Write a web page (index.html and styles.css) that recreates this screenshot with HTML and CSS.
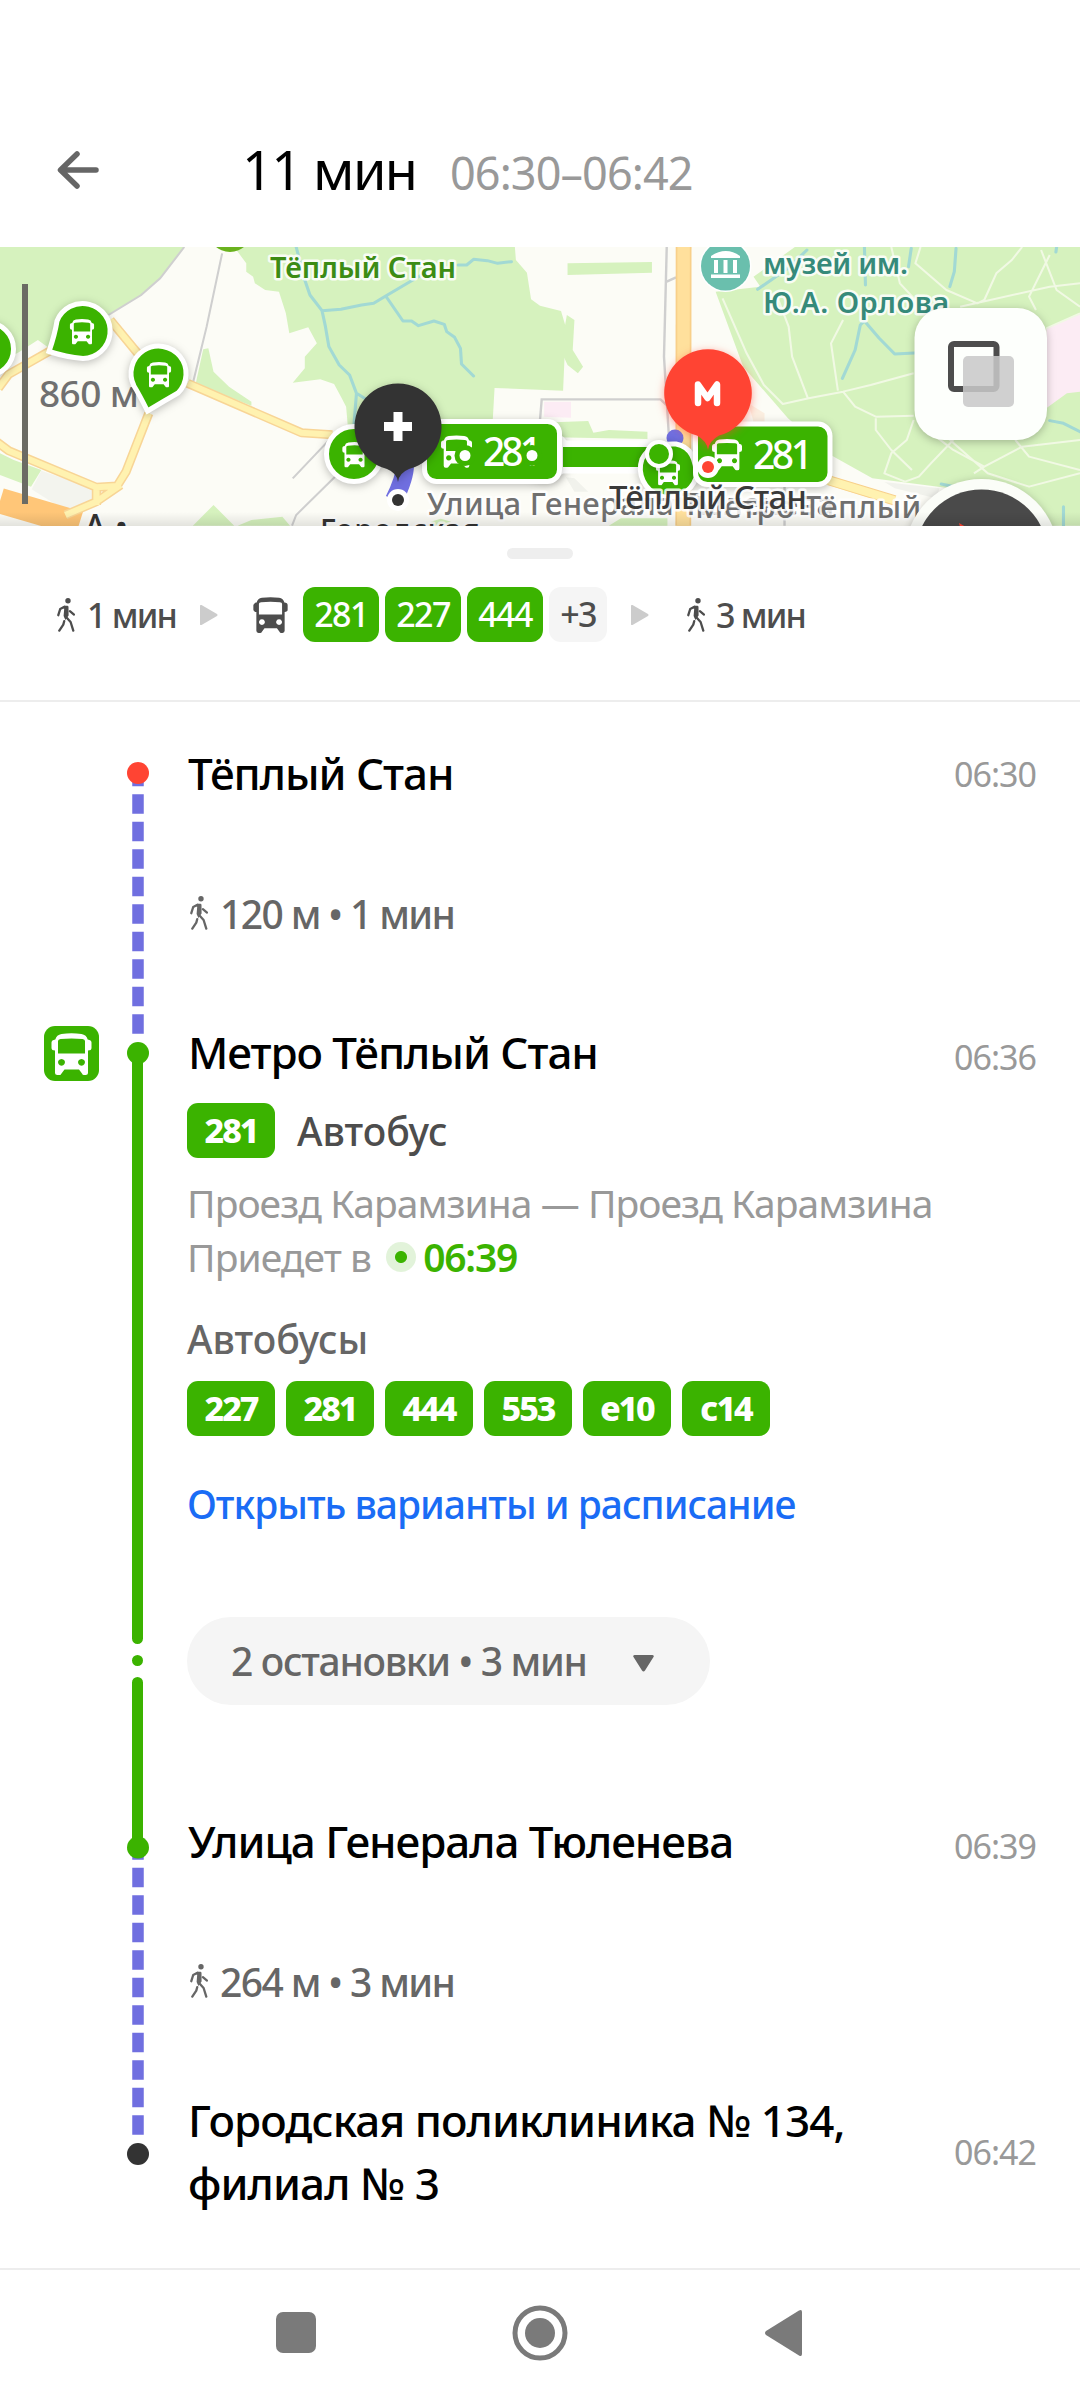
FILE: index.html
```html
<!DOCTYPE html>
<html lang="ru">
<head>
<meta charset="utf-8">
<title>Маршрут</title>
<link rel="stylesheet" href="styles.css">
</head>
<body>
<svg class="defs" width="0" height="0" aria-hidden="true">
  <defs>
    <symbol id="bus" viewBox="0 0 40 42">
      <path fill="currentColor" fill-rule="evenodd" d="M10 1Q20-.6 30 1Q35 1.8 36.2 6.5Q40 7 40 9.5V15Q40 17.5 36.5 17.5V39.5Q36.5 42 34 42H32.5Q31 42 30.5 40.5L27.5 36.5H13L10 40.5Q9.5 42 8 42H6Q3.5 42 3.5 39.5V17.5Q0 17.5 0 15V9.5Q0 7 3.8 6.5Q5 1.8 10 1ZM9 6Q6.5 6.3 6.5 8V20.5H33.5V8Q33.5 6.3 31 6Q20 5 9 6ZM10 25.9a3.4 3.4 0 1 0 .01 0ZM30 25.9a3.4 3.4 0 1 0 .01 0Z"/>
    </symbol>
    <symbol id="walk" viewBox="0 0 18 34">
      <circle cx="11" cy="2.8" r="2.7" fill="currentColor"/>
      <path fill="currentColor" d="M4.5 9.6L7.9 7.8H10.4Q11.4 7.8 11.5 9L11.6 17.4L8.4 22L6.6 18L7.2 10.8Z"/>
      <g fill="none" stroke="currentColor" stroke-width="2.3" stroke-linecap="round" stroke-linejoin="round">
        <path d="M1.3 17.2L3.2 11L7.5 8.8M12.9 13.2L17 16.6M8.6 18.5L13.6 24L16.3 32.6M7.2 23.2L6.3 26.6L2.3 32.6"/>
      </g>
    </symbol>
  </defs>
</svg>

<header class="header">
  <svg class="back" viewBox="0 0 42 38"><path d="M20 3L3.500 19L20 35M4 19H39"/></svg>
  <h1 class="total">11 мин</h1>
  <span class="range">06:30–06:42</span>
</header>

<svg class="map" viewBox="0 247 1080 279">
  <rect x="0" y="247" width="1080" height="279" fill="#fcfcf6"/>
  <g transform="translate(0 240) scale(.3444 .3333)">
    <g fill="#d6f2be">
      <path d="M0 21H535L465 115L410 165L315 225L150 330L110 300L50 340L20 350L0 352Z"/>
      <path d="M680 21L715 70V95L735 110L740 130L770 150L810 155L830 220L840 280L895 262L920 310L885 350V385L850 428L930 418L970 432L990 470L1005 500L1010 560L1430 555L1436 444L1635 452L1643 262L1629 213L1568 197L1542 178L1530 98L1498 60L1495 21Z"/>
      <path d="M590 328L605 325L620 395L665 440L730 485V497L568 432Z"/>
      <path d="M0 640L40 660L120 690L90 740L0 705Z"/>
      <path d="M560 857L620 795L680 857ZM690 857L730 840L820 830L842 857ZM1250 845L1280 836L1310 845L1300 857H1260Z"/>
    </g>
    <path fill="#f3f4ee" d="M120 692L270 745V790L190 812L92 748Z"/>
    <g fill="none" stroke="#cfcfcf" stroke-width="6">
      <path d="M535 21L465 115L410 165L315 225M645 40L600 260L560 430M965 590L850 715M975 708L860 825L848 857"/>
    </g>
    <path d="M0 782L230 852" fill="none" stroke="#ffc678" stroke-width="76"/>
    <g fill="none" stroke-linejoin="round">
      <path stroke="#f8d596" stroke-width="27" d="M-10 605L25 632L280 742L340 738L366 695L432 520M-5 445L25 403L150 330M320 240L400 340M545 430L875 578L965 584M190 825L280 785L350 735M280 742V795"/>
      <path stroke="#fff2b0" stroke-width="18" d="M-10 605L25 632L280 742L340 738L366 695L432 520M-5 445L25 403L150 330M320 240L400 340M545 430L875 578L965 584M190 825L280 785L350 735M280 742V795"/>
    </g>
    <g fill="none" stroke="#a2d9d4" stroke-width="9" stroke-linejoin="round" stroke-linecap="round">
      <path d="M860 21L885 120L900 165L935 212L945 260L955 320L985 375L1015 405L1035 460L1028 552M935 212L990 208L1050 195L1085 190L1120 168L1195 122L1240 95M1120 168L1170 243H1195L1215 257L1260 243L1290 253L1297 275L1320 292L1337 325L1340 372L1375 408M1330 75H1355L1375 58L1415 62L1445 70L1485 65M1035 460L1070 482"/>
    </g>
  </g>
  <g transform="translate(540 240) scale(.3444 .3333)">
    <g fill="#d6f2be">
      <path d="M80 70L325 66V98L80 105ZM78 225L100 240L95 330L125 380L110 400L80 375L60 330Z"/>
      <path d="M40 547L140 543L155 578L200 570L312 575V597L40 592Z"/>
      <path d="M740 21L620 110L640 140L510 155L590 380L720 535L835 640L965 715L1190 745L1200 857H1568V21Z"/>
      <path d="M200 857L235 835H370V857Z"/>
    </g>
    <path fill="#fcecf4" d="M12 485H90V533L12 530ZM1470 265L1568 222V455L1530 460L1470 505Z"/>
    <path fill="#fbeee0" d="M605 490L652 520V545H620Z"/>
    <path fill="#f1f2ec" d="M1000 726L1160 745L1150 775L1030 745ZM75 712L100 715L140 755H100Z"/>
    <g fill="none" stroke="#cfcfcf" stroke-width="7">
      <path d="M368 21L360 350L375 600M0 540L5 478H350L372 500M368 125L395 112M710 730V857"/>
    </g>
    <path stroke="#f8d08a" stroke-width="46" d="M417 21L416 857"/>
    <path stroke="#ffe09c" stroke-width="36" d="M417 21L416 857"/>
    <path stroke="#fff2b0" stroke-width="28" d="M835 720L1030 782"/>
    <path stroke="#f8d08a" stroke-width="3" d="M835 706L1034 768M835 734L1030 796"/>
    <g fill="none" stroke="#f1f9e4" stroke-width="6" stroke-linejoin="round">
      <path d="M530 175L600 340L650 435L705 492L780 475L880 455L960 435L1085 400M685 160L722 260L732 350L778 475M880 240L845 310L865 452M880 455L915 500L975 530L1085 527M975 535V570L1020 630L1080 690M1020 21L1045 130L1090 180M1105 21L1090 70L1180 150L1270 190L1290 180L1325 100L1370 60L1400 21M1220 200L1480 140L1568 130M1455 30L1500 150L1568 200M1480 45L1420 170L1440 210M1150 590L1200 630L1290 680L1260 700M1290 680L1400 620L1568 600M1180 590L1300 700L1420 740L1568 700M1380 600L1420 650L1568 690M1470 265L1568 220M1085 540L1065 600L1020 640L1000 700L1060 725L1100 710L1135 670L1200 600"/>
    </g>
    <g fill="none" stroke="#a2d9d4" stroke-width="9" stroke-linejoin="round" stroke-linecap="round">
      <path d="M775 30L720 85L632 148M942 21L945 135M1078 25L1070 80M1208 25L1203 95L1190 140M1500 21L1498 36M878 415L915 330L930 255L942 243L985 295L1030 342L1130 337M1480 542L1520 550L1568 575M1165 732L1210 742M1520 800V857"/>
    </g>
  </g>

  <g class="halo-label">
    <text x="270" y="278" font-size="29" fill="#3c8c14" font-weight="600" textLength="186">Тёплый Стан</text>
    <text x="763" y="273.500" font-size="29" fill="#368a7a" font-weight="600" textLength="145">музей им.</text>
    <text x="763" y="312.500" font-size="29" fill="#368a7a" font-weight="600" textLength="186">Ю.А. Орлова</text>
  </g>
  <circle cx="725.500" cy="266" r="26" fill="#fff"/>
  <circle cx="725.500" cy="266" r="24.500" fill="#6abfad"/>
  <path fill="#fff" d="M711 256Q726 246 740 256V258H711ZM714 260H718V273H714ZM723.500 260H727.500V273H723.500ZM733 260H737V273H733ZM711 274.500H740V278H711Z"/>
  <circle cx="230" cy="230" r="22" fill="#6ab21e"/>

  <!-- scale -->
  <path stroke="#6b6b64" stroke-width="6" d="M25 284V504"/>
  <text x="39" y="407" font-size="37" font-weight="500" fill="#707070" textLength="100">860 м</text>

  <!-- vehicles -->
  <g fill="#3bb300" stroke="#fff" stroke-width="5" class="lift">
    <circle cx="-13" cy="349" r="26.500"/>
    <path d="M49 351.500Q55 334 57 321A27.500 27.500 0 1 1 83 358.500Q66 357 49 351.500Z"/>
    <path d="M147.500 411Q139 394 134 386A27.500 27.500 0 1 1 178 393Q164 401 147.500 411Z"/>
    <circle cx="354" cy="454" r="27.500"/>
  </g>
  <g color="#fff">
    <use href="#bus" x="69.500" y="319" width="25" height="25.500"/>
    <use href="#bus" x="146.500" y="362" width="25" height="25.500"/>
    <use href="#bus" x="342" y="442" width="25" height="25.500"/>
  </g>

  <!-- route -->
  <circle cx="546" cy="455" r="25" fill="#fff" class="lift"/>
  <path stroke="#fff" stroke-width="33" d="M560 457H660"/>
  <path stroke="#3bb300" stroke-width="20" d="M563 457H660"/>
  <path fill="none" stroke="#706fe0" stroke-width="18" d="M405 465Q405 478 394 500"/>
  <circle cx="675" cy="438" r="8.500" fill="#706fe0"/>
  <path class="lift" fill="#3bb300" stroke="#fff" stroke-width="5" d="M676 444Q697 448 696 478A28 28 0 1 1 642 459Q650 443 676 444Z"/>
  <use href="#bus" x="656" y="460" width="24" height="25.500" color="#fff"/>
  <circle cx="659" cy="454" r="12" fill="#3bb300" stroke="#fff" stroke-width="4" class="lift"/>
  <g fill="#3bb300" stroke="#fff" stroke-width="5" class="lift">
    <rect x="424.500" y="421.500" width="135" height="60" rx="12"/>
    <rect x="695.500" y="424" width="134.500" height="60.500" rx="12"/>
  </g>
  <use href="#bus" x="441" y="435" width="31" height="33" color="#fff"/>
  <use href="#bus" x="712" y="438" width="30" height="33" color="#fff"/>
  <g fill="#fff" font-size="39" font-weight="500">
    <text x="483" y="466" textLength="59">281</text>
    <text x="753" y="468.500" textLength="60">281</text>
  </g>
  <g fill="#fff" stroke="#3bb300" stroke-width="5"><circle cx="465" cy="455.500" r="8"/><circle cx="532" cy="455.500" r="8"/></g>

  <g class="halo-label">
    <text x="427" y="515" font-size="31" fill="#707070" textLength="407">Улица Генерала Тюленева</text>
    <text x="695" y="518" font-size="31" fill="#707070" textLength="308">Метро Тёплый Стан</text>
    <text x="609" y="508.500" font-size="33" fill="#3a3a3a" textLength="198">Тёплый Стан</text>
    <text x="320" y="541" font-size="30" fill="#333" textLength="160">Городская</text>
    <text x="84" y="539" font-size="34" fill="#333">А •</text>
  </g>

  <!-- start and finish pins -->
  <g>
    <circle cx="398" cy="500" r="11" fill="#fff"/><circle cx="398" cy="500" r="6" fill="#333"/>
    <path class="lift" fill="#333" d="M398 482Q397 473 387 469A43.500 43.500 0 1 1 409 469Q399 473 398 482Z"/>
    <path stroke="#fff" stroke-width="9" d="M384 426.500H412M398 412V441"/>
    <circle cx="708" cy="467" r="11" fill="#fff"/><circle cx="708" cy="467" r="6" fill="#ff4433"/>
    <path class="lift-red" fill="#ff4433" d="M708 450Q707 441 697 435.500A43.800 43.800 0 1 1 719 435.500Q709 441 708 450Z"/>
    <path fill="none" stroke="#fff" stroke-width="6.500" stroke-linecap="round" stroke-linejoin="round" d="M698 403V384.500L707.500 398L717 384.500V403"/>
  </g>

  <!-- map controls -->
  <rect class="lift" x="914.500" y="308" width="132.500" height="132" rx="30" fill="#fdfffc"/>
  <rect x="951" y="344" width="45.500" height="45" rx="3" fill="none" stroke="#4d4d4d" stroke-width="6"/>
  <rect x="963" y="356" width="51" height="51" rx="5" fill="#c8c8c8" fill-opacity=".86"/>
  <circle class="lift" cx="981.500" cy="556" r="77" fill="#fbfdf8"/>
  <circle cx="981.500" cy="556" r="66.500" fill="#4a4a4a"/>
  <path fill="#ff4433" d="M959 523L966 527H960Z"/>
  <linearGradient id="edge" x2="0" y2="1"><stop offset="0" stop-color="#000" stop-opacity="0"/><stop offset="1" stop-color="#000" stop-opacity=".1"/></linearGradient>
  <rect x="0" y="512" width="1080" height="14" fill="url(#edge)"/>
</svg>

<section class="summary">
  <div class="handle"></div>
  <div class="legs">
    <svg class="walk-icon"><use href="#walk"/></svg>
    <span class="leg-time first">1 мин</span>
    <svg class="next" viewBox="0 0 18 20"><path d="M0 1Q0-.5 1.500 0L17 9Q18 10 17 11L1.500 20Q0 20.500 0 19Z"/></svg>
    <svg class="bus-icon"><use href="#bus"/></svg>
    <span class="chip">281</span><span class="chip">227</span><span class="chip">444</span><span class="chip more">+3</span>
    <svg class="next second" viewBox="0 0 18 20"><path d="M0 1Q0-.5 1.500 0L17 9Q18 10 17 11L1.500 20Q0 20.500 0 19Z"/></svg>
    <svg class="walk-icon"><use href="#walk"/></svg>
    <span class="leg-time">3 мин</span>
  </div>
</section>

<main class="timeline">
  <div class="modes"><div class="mode"><svg><use href="#bus"/></svg></div></div>
  <svg class="rail" viewBox="127 702 22 1566">
    <g fill="none" stroke="#706fe0" stroke-width="11.500">
      <path stroke-dasharray="19.500 8" d="M138 766.800V1040"/>
      <path stroke-dasharray="19.500 8" d="M138 1840.300V2140"/>
    </g>
    <g fill="none" stroke="#3bb300" stroke-width="11" stroke-linecap="round">
      <path d="M137.500 1053V1638.500M137.500 1660.400V1660.500M137.500 1682.500V1848"/>
    </g>
    <circle cx="138" cy="773" r="11" fill="#ff4433"/>
    <circle cx="138" cy="1053" r="11" fill="#3bb300"/>
    <circle cx="138" cy="1847.500" r="11" fill="#3bb300"/>
    <circle cx="138" cy="2154" r="11" fill="#333"/>
  </svg>
  <div class="steps">
    <div class="stop"><h2>Тёплый Стан</h2><time>06:30</time></div>
    <div class="walk"><svg class="walk-icon"><use href="#walk"/></svg><span>120 м • 1 мин</span></div>
    <div class="stop"><h2>Метро Тёплый Стан</h2><time class="low">06:36</time></div>
    <div class="vehicle"><span class="badge">281</span><span class="kind">Автобус</span></div>
    <div class="info">
      <div class="direction">Проезд Карамзина — Проезд Карамзина</div>
      <div class="arrival"><span>Приедет в</span><i class="live"></i><b>06:39</b></div>
    </div>
    <div class="others">Автобусы</div>
    <div class="badges"><span class="badge">227</span><span class="badge">281</span><span class="badge">444</span><span class="badge">553</span><span class="badge">е10</span><span class="badge">с14</span></div>
    <a class="link">Открыть варианты и расписание</a>
    <div class="stops"><span>2 остановки • 3 мин</span><svg viewBox="0 0 21 17"><path d="M1.500 0H19.500Q21.500 .5 20.500 2L12 15.500Q10.500 17.500 9 15.500L.5 2Q-.5 .5 1.500 0Z"/></svg></div>
    <div class="stop after"><h2>Улица Генерала Тюленева</h2><time class="low">06:39</time></div>
    <div class="walk"><svg class="walk-icon"><use href="#walk"/></svg><span>264 м • 3 мин</span></div>
    <div class="stop"><h2 class="long">Городская поликлиника № 134,<br>филиал № 3</h2><time>06:42</time></div>
  </div>
</main>

<nav class="navbar">
  <svg viewBox="0 0 40 41"><rect width="40" height="41" rx="7"/></svg>
  <svg class="home" viewBox="0 0 56 56"><circle cx="28" cy="28" r="25" fill="none" stroke="#7a7a7a" stroke-width="5"/><circle cx="28" cy="28" r="15"/></svg>
  <svg class="prev" viewBox="0 0 38 48"><path d="M1 22L34 1.500Q37 0 37 3V45Q37 48 34 46.500L1 26Q-1 24 1 22Z"/></svg>
</nav>
</body>
</html>
```
FILE: styles.css
```css
* { box-sizing: border-box; }

body {
  margin: 0;
  width: 1080px;
  height: 2400px;
  overflow: hidden;
  display: flex;
  flex-direction: column;
  background: #fff;
  color: #000;
  font-family: "Noto Sans", "Open Sans", sans-serif;
  white-space: nowrap;
}

.defs { position: absolute; }
svg { display: block; flex: none; }
h1, h2 { margin: 0; font-weight: 500; }

/* header */
.header {
  height: 247px;
  flex: none;
  padding: 92px 0 0 57px;
  display: flex;
  align-items: baseline;
}
.back {
  width: 42px;
  height: 38px;
  align-self: flex-start;
  margin-top: 59px;
  fill: none;
  stroke: #666;
  stroke-width: 5.5;
  stroke-linecap: round;
  stroke-linejoin: round;
}
.total { margin-left: 143px; width: 208px; font-size: 54px; font-weight: 450; line-height: 154px; letter-spacing: -1.6px; }
.range { font-size: 45px; color: #999; letter-spacing: -.9px; }

/* map */
.map { width: 1080px; height: 279px; overflow: hidden; }
.halo-label { font-weight: 500; stroke: #fff; stroke-opacity: .85; stroke-width: 5px; stroke-linejoin: round; paint-order: stroke; }
.lift { filter: drop-shadow(0 2px 4px rgba(0, 0, 0, .25)); }
.lift-red { filter: drop-shadow(0 2px 4px rgba(255, 68, 51, .5)); }

/* route summary */
.summary { height: 176px; flex: none; border-bottom: 2px solid #ededed; padding-top: 22px; }
.handle { width: 66px; height: 11px; margin: 0 auto 28px; border-radius: 6px; background: #eee; }
.legs { display: flex; align-items: center; height: 55px; padding-left: 57px; color: #4d4d4d; font-size: 34px; font-weight: 500; }
.walk-icon { width: 18px; height: 34px; }
.leg-time { margin-left: 11px; letter-spacing: -1.8px; }
.leg-time.first { width: 113px; margin-left: 12px; }
.next { width: 18px; height: 20px; fill: #ccc; }
.next.second { margin: 0 38px 0 24px; }
.bus-icon { width: 35px; height: 36px; margin: 0 15px 0 35px; }
.chip {
  width: 76px;
  height: 55px;
  margin-right: 6px;
  border-radius: 12px;
  background: #3bb300;
  color: #fff;
  font-weight: 500;
  line-height: 54px;
  text-align: center;
  letter-spacing: -1.6px;
}
.chip.more { width: 58px; margin-right: 0; background: #f5f5f5; color: #4d4d4d; }

/* timeline */
.timeline { display: flex; height: 1566px; flex: none; }
.modes { width: 127px; padding: 324px 0 0 44px; }
.mode { width: 55px; height: 55px; border-radius: 11px; background: #3bb300; color: #fff; display: grid; place-items: center; }
.mode svg { width: 41px; height: 42px; }
.rail { width: 22px; height: 1566px; }
.steps { flex: 1; padding: 40px 44px 0 38px; display: flex; flex-direction: column; }
.stop { display: flex; justify-content: space-between; align-items: center; margin-left: 1px; }
.stop h2 { font-size: 44px; line-height: 63px; letter-spacing: -1.05px; }
.stop h2.long { letter-spacing: -.92px; }
time { font-size: 34px; line-height: 40px; color: #999; letter-spacing: -1px; }
.low { position: relative; top: 4px; }
.walk { display: flex; align-items: center; gap: 12px; height: 52px; margin: 82px 0 82px 3px; font-size: 39px; font-weight: 500; color: #666; letter-spacing: -1.6px; }
.vehicle { display: flex; align-items: center; gap: 22px; height: 55px; margin-top: 19px; }
.kind { font-size: 39px; font-weight: 500; color: #4d4d4d; }
.badge {
  width: 88px;
  height: 55px;
  border-radius: 11px;
  background: #3bb300;
  color: #fff;
  font-size: 34px;
  font-weight: 800;
  line-height: 55px;
  text-align: center;
  letter-spacing: -2px;
}
.info { margin: 18px 0 0; font-size: 39px; line-height: 54px; color: #999; letter-spacing: -.95px; }
.arrival { display: flex; align-items: center; }
.arrival b { color: #3bb300; font-weight: 600; letter-spacing: -1.2px; }
.live { width: 30px; height: 30px; margin: 0 7px 0 15px; border-radius: 50%; background: radial-gradient(circle, #3bb300 5.5px, #e2f3da 6.5px); }
.others { height: 52px; margin: 29px 0 16px; font-size: 39px; line-height: 52px; font-weight: 500; color: #666; }
.badges { display: flex; gap: 11px; }
.link { margin: 42px 0 87px; font-size: 39px; line-height: 52px; font-weight: 500; color: #1a6cf5; letter-spacing: -1px; }
.stops { display: flex; align-items: center; justify-content: space-between; width: 523px; height: 88px; padding: 0 56px 0 44px; border-radius: 44px; background: #f5f5f5; color: #666; font-size: 39px; font-weight: 500; letter-spacing: -1.3px; }
.stops span { position: relative; top: -1px; }
.stops svg { width: 21px; height: 17px; fill: #666; position: relative; top: 2px; }
.after { margin-top: 105px; }

/* system navigation */
.navbar { flex: 1; border-top: 2px solid #ededed; display: flex; align-items: center; padding: 0 0 5px 276px; }
.navbar svg { width: 40px; height: 41px; fill: #7a7a7a; }
.navbar .home { width: 56px; height: 56px; margin: 0 197px 0 196px; }
.navbar .prev { width: 38px; height: 48px; }
```
